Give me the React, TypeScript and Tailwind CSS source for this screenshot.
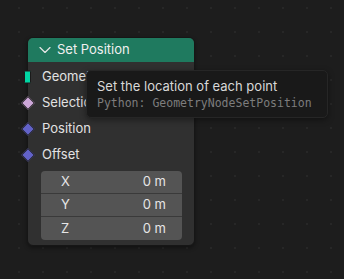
import { ChevronDown } from 'lucide-react';

const sans = "font-['Inter','Noto_Sans',sans-serif]";

function Socket({ kind }: { kind: 'geo' | 'sel' | 'vec' }) {
  if (kind === 'geo') {
    return (
      <span className="absolute left-[-4px] top-1/2 h-[13px] w-[7px] -translate-y-1/2 rounded-[1px] border border-[#1a1a1a] bg-[#00d6a3]" />
    );
  }
  const color = kind === 'sel' ? 'bg-[#cda7d8]' : 'bg-[#6262c8]';
  return (
    <span className={`absolute left-[-5px] top-1/2 h-[10px] w-[10px] -translate-y-1/2 rotate-45 border border-[#202020] ${color}`} />
  );
}

function Row({ label, kind }: { label: string; kind: 'geo' | 'sel' | 'vec' }) {
  return (
    <div className="relative flex h-[26px] items-center pl-[14px] text-[13px] text-[#e2e2e2]">
      <Socket kind={kind} />
      <span>{label}</span>
    </div>
  );
}

function Field({ axis, last }: { axis: string; last?: boolean }) {
  return (
    <div className={`flex h-[23px] items-center justify-between bg-[#545454] pl-[20px] pr-[16px] text-[13px] text-[#e6e6e6] ${last ? '' : 'border-b border-[#3a3a3a]'}`}>
      <span>{axis}</span>
      <span>0 m</span>
    </div>
  );
}

export default function App() {
  return (
    <div className={`relative min-h-screen w-full bg-[#1d1d1d] bg-[radial-gradient(circle,#272727_1px,transparent_1.5px)] bg-[length:24px_24px] bg-[position:7px_20px] pl-[27px] pt-[37px] ${sans}`}>
      <div className="w-[168px] rounded-[6px] border border-[#161616] bg-[#303030] shadow-[0_2px_4px_rgba(0,0,0,0.4)]">
        <div className="flex h-[24px] items-center gap-[2px] rounded-t-[5px] bg-[#1f7a5f] pl-[7px] text-[13px] text-[#f0f0f0]">
          <ChevronDown size={20} strokeWidth={1.4} className="text-[#e8e8e8]" />
          <span>Set Position</span>
        </div>
        <div className="pt-[2px]">
          <Row label="Geometry" kind="geo" />
          <Row label="Selection" kind="sel" />
          <Row label="Position" kind="vec" />
          <Row label="Offset" kind="vec" />
          <div className="ml-[13px] mr-[12px] mt-[3px] mb-[5px] overflow-hidden rounded-[4px]">
            <Field axis="X" />
            <Field axis="Y" />
            <Field axis="Z" last />
          </div>
        </div>
      </div>

      <div className="absolute left-[86px] top-[70px] w-[242px] rounded-[5px] border border-[#262626] bg-[#191919] px-[10px] pb-[5px] pt-[7px] shadow-[0_2px_6px_rgba(0,0,0,0.4)]">
        <div className="text-[13px] leading-[17px] text-[#d8d8d8]">Set the location of each point</div>
        <div className="font-['DejaVu_Sans_Mono',monospace] text-[11.5px] leading-[17px] text-[#7d7d7d]">Python: GeometryNodeSetPosition</div>
      </div>
    </div>
  );
}
